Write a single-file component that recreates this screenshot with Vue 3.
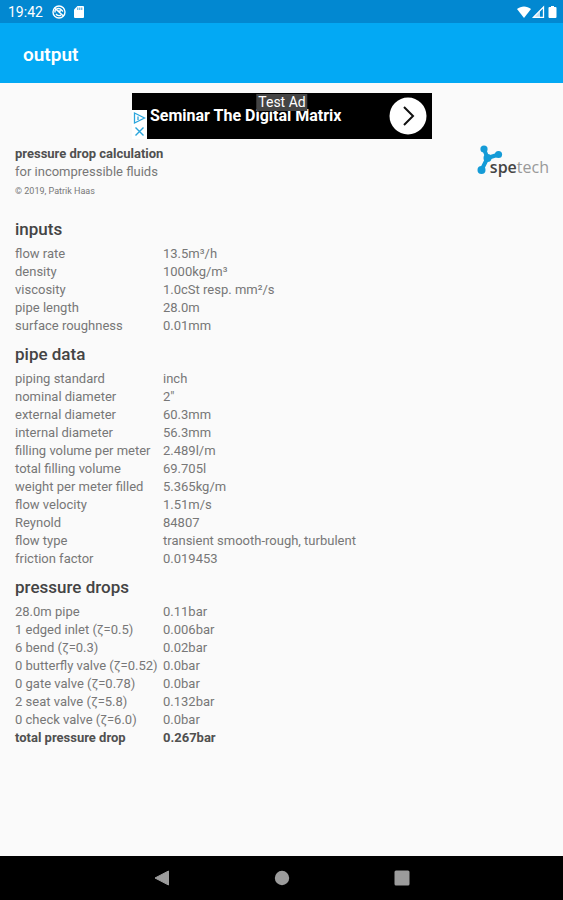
<script setup>
const sections = [
  {
    title: 'inputs',
    rows: [
      ['flow rate', '13.5m³/h'],
      ['density', '1000kg/m³'],
      ['viscosity', '1.0cSt resp. mm²/s'],
      ['pipe length', '28.0m'],
      ['surface roughness', '0.01mm'],
    ],
  },
  {
    title: 'pipe data',
    rows: [
      ['piping standard', 'inch'],
      ['nominal diameter', '2"'],
      ['external diameter', '60.3mm'],
      ['internal diameter', '56.3mm'],
      ['filling volume per meter', '2.489l/m'],
      ['total filling volume', '69.705l'],
      ['weight per meter filled', '5.365kg/m'],
      ['flow velocity', '1.51m/s'],
      ['Reynold', '84807'],
      ['flow type', 'transient smooth-rough, turbulent'],
      ['friction factor', '0.019453'],
    ],
  },
  {
    title: 'pressure drops',
    rows: [
      ['28.0m pipe', '0.11bar'],
      ['1 edged inlet (ζ=0.5)', '0.006bar'],
      ['6 bend (ζ=0.3)', '0.02bar'],
      ['0 butterfly valve (ζ=0.52)', '0.0bar'],
      ['0 gate valve (ζ=0.78)', '0.0bar'],
      ['2 seat valve (ζ=5.8)', '0.132bar'],
      ['0 check valve (ζ=6.0)', '0.0bar'],
      ['total pressure drop', '0.267bar', true],
    ],
  },
]
</script>

<template>
  <div class="screen">
    <div class="status">
      <span class="clock">19:42</span>
      <svg class="sync" width="14" height="14" viewBox="0 0 14 14" aria-hidden="true">
        <circle cx="7" cy="7" r="6" fill="none" stroke="currentColor" stroke-width="1.4" />
        <path d="M3 7.5V5.5C4.5 3 8 3 9.500 5L11 6.500M2.500 3L11.500 11M4 9C5.500 11 8 11 9 10M6 6H9" fill="none" stroke="currentColor" stroke-width="1.4" />
      </svg>
      <svg width="12" height="14" viewBox="0 0 12 14" aria-hidden="true">
        <path d="M4.500 1H10Q11 1 11 2V12Q11 13 10 13H2Q1 13 1 12V4.500Z" fill="currentColor" />
        <path d="M4.800 2.500V5M6.800 2.500V5M8.800 2.500V5" stroke="#0288d1" stroke-width="0.8" />
      </svg>
      <div class="signals">
        <svg width="16" height="14" viewBox="0 0 16 14" aria-hidden="true">
          <path d="M1 4C5 .5 11 .5 15 4L8 13Z" fill="currentColor" />
        </svg>
        <svg width="13" height="14" viewBox="0 0 13 14" aria-hidden="true">
          <path d="M1.500 12.300L11.500 2V12.300Z" fill="none" stroke="currentColor" stroke-width="1.3" />
          <path d="M1 13L8 6V13Z" fill="currentColor" fill-opacity="0.75" />
        </svg>
        <svg class="battery" width="9" height="14" viewBox="0 0 9 14" aria-hidden="true">
          <path d="M3 1H6V2H7.500Q8.500 2 8.500 3V12Q8.500 13 7.500 13H1.500Q.5 13 .5 12V3Q.5 2 1.500 2H3Z" fill="currentColor" />
        </svg>
      </div>
    </div>

    <header class="appbar"><h1>output</h1></header>

    <main>
      <a class="ad" href="#">
        <span class="adtext">Seminar The Digital Matrix</span>
        <svg class="arrow" width="38" height="38" viewBox="0 0 38 38" aria-hidden="true">
          <circle cx="19" cy="19" r="18.500" fill="#fff" />
          <path d="M15 10L24 19L15 28" fill="none" stroke="#111" stroke-width="2" />
        </svg>
        <span class="test">Test Ad</span>
        <svg class="choices" width="15" height="29" viewBox="0 0 15 29" aria-hidden="true">
          <path d="M0 0H15V29H0Z" fill="#fff" />
          <path d="M2.500 3L12.500 8L2.500 13ZM6 6.500V10" fill="none" stroke="#2aa5dc" stroke-width="1.3" />
          <path d="M3.500 17.500L11.500 25.500M11.500 17.500L3.500 25.500" stroke="#2aa5dc" stroke-width="1.400" />
        </svg>
      </a>

      <div class="intro">
        <div>
          <p class="strong">pressure drop calculation</p>
          <p>for incompressible fluids</p>
          <p class="copyright">© 2019, Patrik Haas</p>
        </div>
        <div class="logo">
          <svg width="26" height="30" viewBox="0 0 26 30" aria-hidden="true">
            <path d="M7 4L10.500 13L20 10M10.500 13L4.500 25" fill="none" stroke="#149bd7" stroke-width="4" stroke-linejoin="round" />
            <circle cx="7" cy="4" r="3.600" fill="#149bd7" />
            <circle cx="21.500" cy="9.500" r="3.600" fill="#149bd7" />
            <circle cx="4.500" cy="25" r="4" fill="#149bd7" />
            <circle cx="10.500" cy="13" r="4" fill="#149bd7" />
          </svg>
          <span class="wordmark"><b>spe</b>tech</span>
        </div>
      </div>

      <section v-for="s in sections" :key="s.title">
        <h2>{{ s.title }}</h2>
        <table>
          <tbody>
            <tr v-for="[name, value, total] in s.rows" :key="name" :class="{ strong: total }">
              <th scope="row">{{ name }}</th>
              <td>{{ value }}</td>
            </tr>
          </tbody>
        </table>
      </section>
    </main>

    <nav>
      <button aria-label="Back">
        <svg width="16" height="16" viewBox="0 0 16 16"><path d="M14.500 1V15L1 8Z" fill="#9c9c9c" stroke="#9c9c9c" stroke-linejoin="round" /></svg>
      </button>
      <button aria-label="Home">
        <svg width="16" height="16" viewBox="0 0 16 16"><circle cx="8" cy="8" r="7.200" fill="#9c9c9c" /></svg>
      </button>
      <button aria-label="Recent apps">
        <svg width="16" height="16" viewBox="0 0 16 16"><rect x=".5" y=".5" width="15" height="15" rx="1.500" fill="#9c9c9c" /></svg>
      </button>
    </nav>
  </div>
</template>

<style>
body {
  margin: 0;
  background: #fafafa;
}
</style>

<style scoped>
.screen {
  display: flex;
  flex-direction: column;
  min-height: 100vh;
  font: 13px/18px Roboto, sans-serif;
  color: #777;
}
.status {
  display: flex;
  align-items: center;
  height: 23px;
  padding: 0 6px 0 8px;
  background: #0288d1;
  color: #fff;
}
.clock {
  font-size: 14px;
  margin-right: 9px;
}
.sync {
  margin-right: 7px;
}
.signals {
  display: flex;
  margin-left: auto;
}
.battery {
  margin-left: 3px;
}
.appbar {
  display: flex;
  align-items: center;
  box-sizing: border-box;
  height: 60px;
  padding: 3px 23px 0;
  background: #03a9f4;
  color: #fff;
}
h1 {
  margin: 0;
  font-size: 19px;
  line-height: 24px;
  font-weight: 600;
}
main {
  flex: 1;
  padding: 10px 14px 16px 15px;
}
.ad {
  position: relative;
  display: flex;
  align-items: center;
  justify-content: space-between;
  box-sizing: border-box;
  width: 300px;
  max-width: 100%;
  height: 46px;
  margin: 0 auto;
  padding: 0 5px 0 18px;
  background: #000;
  color: #fff;
  text-decoration: none;
}
.adtext {
  font-size: 16px;
  font-weight: 700;
}
.test {
  position: absolute;
  top: 1px;
  left: 50%;
  transform: translateX(-50%);
  padding: 0 2px;
  background: #444;
  font-size: 14px;
  line-height: 17px;
}
.choices {
  position: absolute;
  left: 0;
  bottom: 0;
}
.intro {
  display: flex;
  justify-content: space-between;
  padding-top: 6px;
  margin-bottom: 20px;
}
p {
  margin: 0;
}
.strong {
  color: #505050;
  font-weight: 700;
}
.copyright {
  margin-top: 3px;
  font-size: 9px;
  line-height: 14px;
}
.logo {
  display: flex;
  align-items: flex-start;
}
.wordmark {
  margin: 12px 0 0 -13px;
  font: 16px/20px "Open Sans", sans-serif;
  color: #999;
}
.wordmark b {
  color: #444;
  font-weight: 600;
}
section + section {
  margin-top: 8px;
}
h2 {
  margin: 0 0 5px;
  color: #444;
  font-size: 17px;
  line-height: 22px;
  font-weight: 500;
}
table {
  border-collapse: collapse;
}
th,
td {
  padding: 0;
  font-weight: inherit;
  text-align: left;
}
th {
  min-width: 148px;
  width: 148px;
  white-space: nowrap;
}
nav {
  display: flex;
  align-items: center;
  justify-content: center;
  gap: 104px;
  height: 44px;
  background: #000;
}
button {
  display: flex;
  padding: 0;
  border: 0;
  background: none;
}
</style>
